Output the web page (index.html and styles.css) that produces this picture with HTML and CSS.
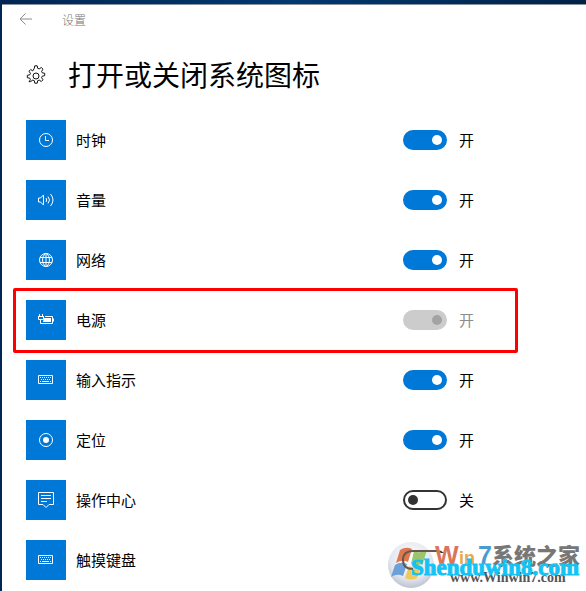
FILE: index.html
```html
<!DOCTYPE html>
<html lang="zh-CN">
<head>
  <meta charset="UTF-8">
  <meta name="viewport" content="width=device-width, initial-scale=1.0">
  <title>设置</title>
  <link rel="stylesheet" href="styles.css">
</head>
<body>

  <svg class="sprite" width="0" height="0" aria-hidden="true">
    <symbol id="keyboard" viewBox="0 0 20 20">
      <path d="M2.500 5.500h14v8h-14z"/>
      <path d="M4 7.500h11M5 9.500h10" stroke-dasharray="1 1"/>
      <path d="M4 11.500h1M6 11.500h7M14 11.500h1"/>
    </symbol>
  </svg>

  <div class="window">
    <header class="titlebar">
      <button class="back" type="button" aria-label="返回">
        <svg width="14" height="12" viewBox="0 0 14 12"><path d="M6.500 .5L1 6l5.500 5.500M1 6h12"/></svg>
      </button>
      <span class="app-name">设置</span>
    </header>

    <div class="heading">
      <svg class="gear" width="22" height="22" viewBox="0 0 22 22">
        <path d="M9.300 3.800L9.800 1.300h2.400l.500 2.500 1.500.600 2.100-1.400 1.700 1.700-1.400 2.100.600 1.500 2.500.500v2.400l-2.500.500-.600 1.500 1.400 2.100-1.700 1.700-2.100-1.400-1.500.600-.500 2.500H9.800l-.500-2.500-1.500-.600-2.100 1.400L4 17.300l1.400-2.100-.600-1.500-2.500-.500v-2.400l2.500-.500.600-1.500L4 6.700 5.700 5l2.100 1.400z" transform="translate(0 -.5)"/>
        <circle cx="11" cy="11" r="3"/>
      </svg>
      <h1>打开或关闭系统图标</h1>
    </div>

    <ul class="list">
      <li class="row">
        <span class="tile"><svg viewBox="0 0 20 20"><circle cx="10" cy="10" r="6.500"/><path d="M9.500 6v4.500H13"/></svg></span>
        <label for="clock">时钟</label>
        <input class="toggle" type="checkbox" id="clock" checked>
        <span class="state">开</span>
      </li>
      <li class="row">
        <span class="tile"><svg viewBox="0 0 20 20"><path d="M2.500 8v4h2l3 3V5l-3 3zM10 8q1.500 2 0 4M12 6.500q3 3.500 0 7M14.500 4q5 6 0 12"/></svg></span>
        <label for="volume">音量</label>
        <input class="toggle" type="checkbox" id="volume" checked>
        <span class="state">开</span>
      </li>
      <li class="row">
        <span class="tile"><svg viewBox="0 0 20 20"><circle cx="10" cy="10" r="6.500"/><path d="M9 3.500q-5 6.500 0 13M11 3.500q5 6.500 0 13M4 7.500h12M4 12.500h12M10 3.500v13"/></svg></span>
        <label for="network">网络</label>
        <input class="toggle" type="checkbox" id="network" checked>
        <span class="state">开</span>
      </li>
      <li class="row marked disabled">
        <span class="tile"><svg viewBox="0 0 20 20"><path d="M3.500 4v2M6.500 4v2M2 6.500h6M2.500 6v3.500h5V6M4.500 9v4.500h12v-7H9M17.500 8.500v3"/><path class="solid" d="M8 8h7v4H7z"/></svg></span>
        <label for="power">电源</label>
        <input class="toggle" type="checkbox" id="power" checked disabled>
        <span class="state">开</span>
      </li>
      <li class="row">
        <span class="tile"><svg><use href="#keyboard"/></svg></span>
        <label for="ime">输入指示</label>
        <input class="toggle" type="checkbox" id="ime" checked>
        <span class="state">开</span>
      </li>
      <li class="row">
        <span class="tile"><svg viewBox="0 0 20 20"><circle cx="10" cy="10" r="6.500"/><circle class="solid" cx="10" cy="10" r="3"/></svg></span>
        <label for="location">定位</label>
        <input class="toggle" type="checkbox" id="location" checked>
        <span class="state">开</span>
      </li>
      <li class="row">
        <span class="tile"><svg viewBox="0 0 20 20"><path d="M2.500 2.500h15v12H13l-3 3-3-3H2.500zM5 5.500h10M5 8.500h10M5 11.500h6"/></svg></span>
        <label for="action">操作中心</label>
        <input class="toggle" type="checkbox" id="action">
        <span class="state">关</span>
      </li>
      <li class="row">
        <span class="tile"><svg><use href="#keyboard"/></svg></span>
        <label for="touch">触摸键盘</label>
        <input class="toggle" type="checkbox" id="touch">
      </li>
    </ul>
  </div>

  <svg class="watermark" width="200" height="50" viewBox="0 0 200 50">
    <defs>
      <radialGradient id="orb" cx="50%" cy="35%" r="65%">
        <stop offset="0" stop-color="#fff"/>
        <stop offset=".7" stop-color="#e3e6ee"/>
        <stop offset="1" stop-color="#bcc2d0"/>
      </radialGradient>
    </defs>
    <!-- hides the lower part of the switch behind the lettering -->
    <path fill="#fff" d="M44 13h20v19H44z"/>
    <circle cx="26" cy="25" r="23" fill="url(#orb)"/>
    <path fill="#e0784f" d="M15 10q6-4 12-1l-4 13q-6-3-12 1z"/>
    <path fill="#9cc46c" d="M29 11q6 3 13-1l-4 13q-7 4-12 1z"/>
    <path fill="#6ba0d8" d="M10 25q6-4 12-1l-4 12q-6-3-12 1z"/>
    <path fill="#f0c95c" d="M24 26q6 3 12-1l-4 13q-6 3-12 0z"/>
    <path class="wm-ring" d="M54 11H28q-10 0-10 9 0 9 10 9"/>
    <text class="wm-title" y="24"><tspan class="wm-w" x="50">W</tspan><tspan class="wm-in" x="74">in</tspan><tspan class="wm-7" x="93">7</tspan><tspan class="wm-cn" x="107">系统之家</tspan></text>
    <text class="wm-url" x="65" y="42">www.Winwin7.com</text>
    <text class="wm-site" x="26" y="35">Shenduwin8.com</text>
  </svg>

</body>
</html>
```
FILE: styles.css
```css
*, *::before, *::after { box-sizing: border-box; margin: 0; padding: 0; }
body {
  font-family: "Noto Sans CJK SC", sans-serif;
  font-size: 15px;
  color: #000;
  background: linear-gradient(90deg, #002552, #003a70 50%, #002147);
  min-height: 100vh;
  padding: 4px 0 0 2px;
  position: relative;
  overflow: hidden;
}
.sprite { position: absolute; }
.window {
  background: #fff;
  border-top: 1px solid #8a929c;
  min-height: calc(100vh - 4px);
}
.titlebar {
  display: flex;
  align-items: center;
  gap: 29px;
  height: 28px;
  padding-left: 17px;
}
.back {
  display: flex;
  background: none;
  border: 0;
  cursor: pointer;
}
.back svg {
  fill: none;
  stroke: #8c8c8c;
}
.app-name {
  font-size: 12px;
  font-weight: 300;
  color: #777;
}
.heading {
  display: flex;
  align-items: center;
  gap: 21px;
  height: 77px;
  padding: 8px 0 0 23px;
}
.heading h1 {
  font-size: 28px;
  line-height: 40px;
  font-weight: 400;
  padding-bottom: 4px;
}
.gear {
  fill: none;
  stroke: #111;
  stroke-linejoin: round;
}
.list {
  list-style: none;
  padding-left: 24px;
}
.row {
  display: grid;
  grid-template-columns: 40px minmax(80px, 317px) 44px auto;
  align-items: center;
  justify-content: start;
  column-gap: 10px;
  height: 60px;
  position: relative;
}
.row label, .state { padding-bottom: 2px; }
.tile {
  display: flex;
  align-items: center;
  justify-content: center;
  width: 40px;
  height: 40px;
  background: #0078d7;
}
.tile svg {
  width: 20px;
  height: 20px;
  fill: none;
  stroke: #fff;
}
.tile .solid {
  fill: #fff;
  stroke: none;
}
.toggle {
  appearance: none;
  display: flex;
  align-items: center;
  width: 44px;
  height: 20px;
  padding: 0 3px;
  border: 2px solid #333;
  border-radius: 10px;
  background: #fff;
  cursor: pointer;
}
.toggle::before {
  content: "";
  width: 10px;
  height: 10px;
  border-radius: 50%;
  background: #333;
}
.toggle:checked {
  justify-content: flex-end;
  background: #0078d7;
  border-color: #0078d7;
}
.toggle:checked::before { background: #fff; }
.toggle:disabled {
  background: #ccc;
  border-color: #ccc;
}
.toggle:disabled::before { background: #a3a3a3; }
.state { padding-left: 2px; }
.disabled .state { color: #8c8c8c; }

/* red frame around the power row */
.marked::after {
  content: "";
  position: absolute;
  top: -2px;
  bottom: -3px;
  left: -13px;
  width: 505px;
  border: 3px solid #f00;
  border-radius: 2px;
  pointer-events: none;
}

.watermark {
  position: absolute;
  right: 1px;
  bottom: 1px;
  pointer-events: none;
}
.wm-ring {
  fill: none;
  stroke: #665850;
  stroke-width: 2;
}
.wm-title {
  font-family: "Liberation Sans", "Noto Sans CJK SC", sans-serif;
  font-size: 22px;
  font-weight: 900;
}
.wm-w { fill: #d9755a; font-size: 25px; }
.wm-in { fill: #e8a94c; font-size: 18px; }
.wm-7 { fill: #4a9cd0; font-size: 25px; }
.wm-cn { fill: #777; }
.wm-url {
  font-family: "Liberation Serif", serif;
  font-size: 14px;
  font-weight: 700;
  fill: #555;
}
.wm-site {
  font-family: "Liberation Serif", serif;
  font-size: 23px;
  font-weight: 700;
  fill: #14c3f5;
  stroke: #14c3f5;
}
```
